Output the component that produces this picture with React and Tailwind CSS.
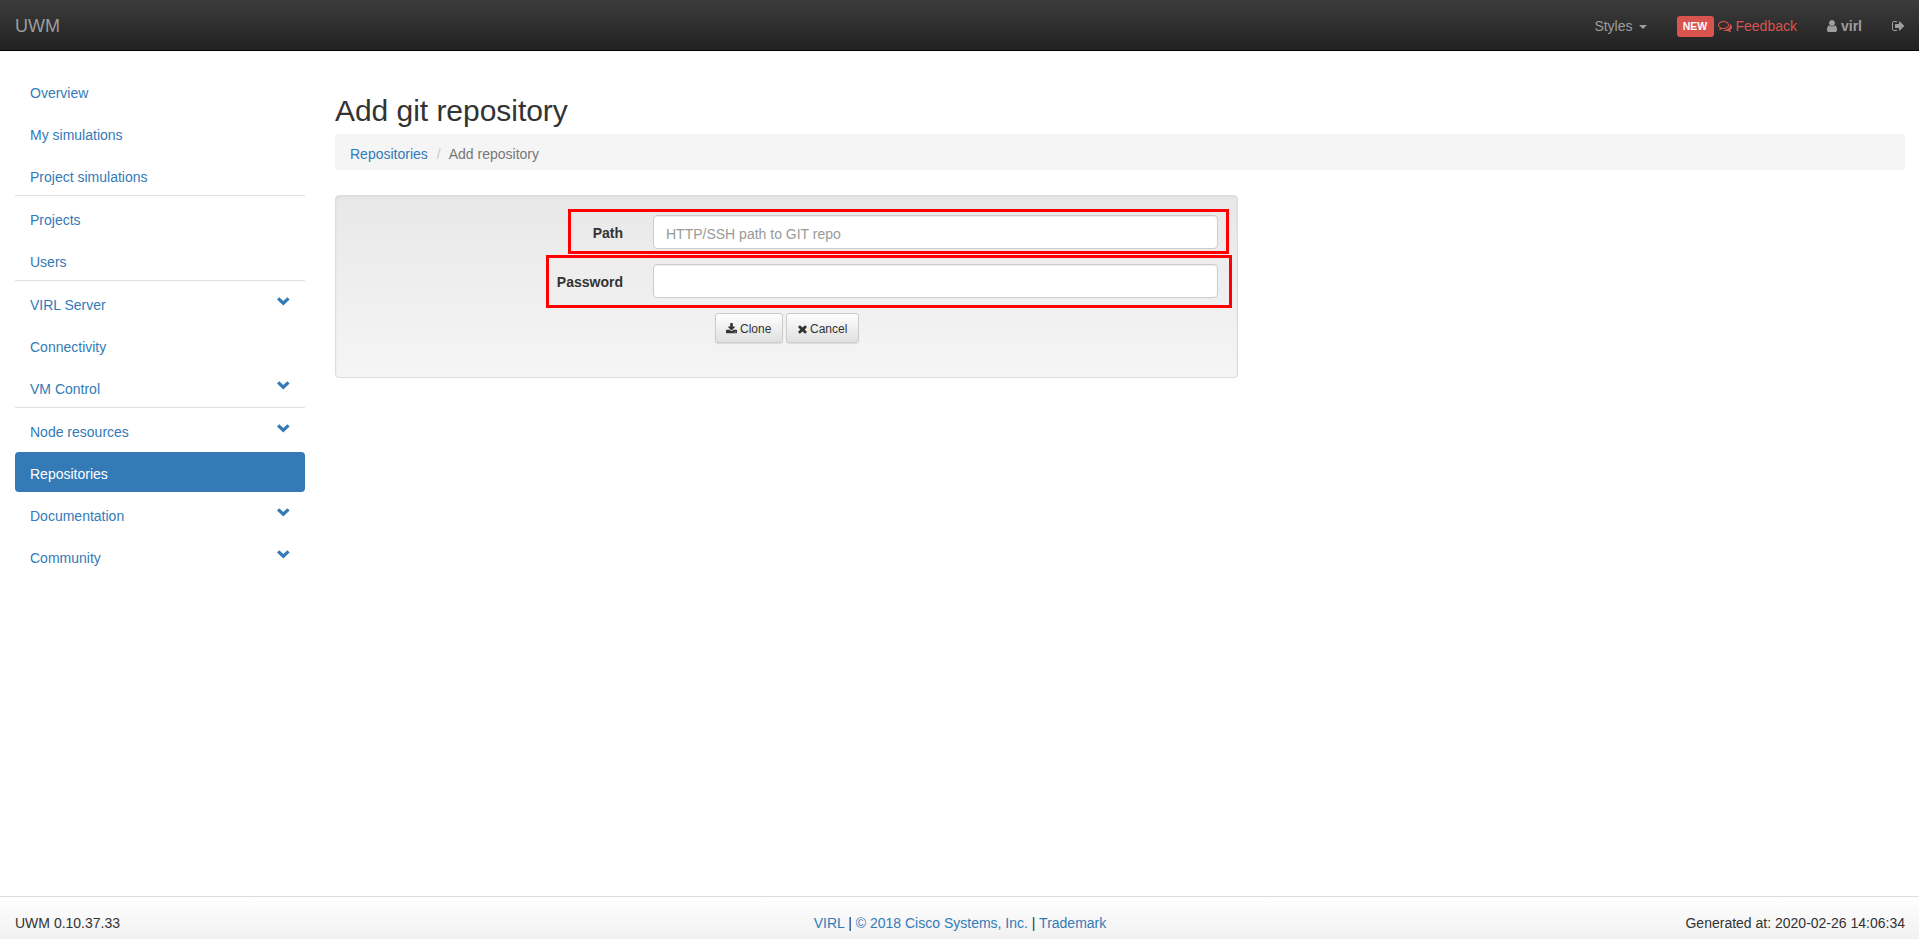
function Glyph({ d, box = "0 0 1792 1792", className }) {
  return (
    <svg viewBox={box} className={className} fill="currentColor" aria-hidden="true">
      <path d={d} />
    </svg>
  );
}

const COMMENTS =
  "M704 384q-153 0-286 52t-211.5 141-78.5 191q0 82 53 158t149 132l97 56-35 84q34-20 62-39l44-31 53 10q78 14 153 14 153 0 286-52t211.5-141 78.5-191-78.5-191-211.5-141-286-52zm0-128q191 0 353.5 68.5t256.5 186.5 94 257-94 257-256.5 186.5-353.5 68.5q-86 0-176-16-124 88-278 128-36 9-86 16h-3q-11 0-20.5-8t-11.5-21q-1-3-1-6.5t.5-6.5 2-6l2.5-5 3.5-5.5 4-5 4.5-5 4-4.5q5-6 23-25t26-29.5 22.5-29 25-38.5 20.5-44q-124-72-195-177t-71-224q0-139 94-257t256.5-186.5 353.5-68.5zm822 1169q10 24 20.5 44t25 38.5 22.5 29 26 29.5 23 25q1 1 4 4.5t4.5 5 4 5 3.5 5.5l2.5 5 2 6 .5 6.5-1 6.5q-3 14-13 22t-22 7q-50-7-86-16-154-40-278-128-90 16-176 16-271 0-472-132 58 4 88 4 161 0 309-45t264-129q125-92 192-212t67-254q0-77-23-152 129 71 204 178t75 230q0 120-71 224.5t-195 176.5z";
const USER =
  "M1536 1399q0 109-62.5 187t-150.5 78h-854q-88 0-150.5-78t-62.5-187q0-85 8.5-160.5t31.5-152 58.5-131 94-89 134.5-34.5q131 128 313 128t313-128q76 0 134.5 34.5t94 89 58.5 131 31.5 152 8.5 160.5zm-256-887q0 159-112.5 271.5t-271.5 112.5-271.5-112.5-112.5-271.5 112.5-271.5 271.5-112.5 271.5 112.5 112.5 271.5z";
const SIGN_OUT =
  "M704 1440q0 4 1 20t.5 26.5-3 23.5-10 19.5-20.5 6.5h-320q-119 0-203.5-84.5t-84.5-203.5v-704q0-119 84.5-203.5t203.5-84.5h320q13 0 22.5 9.5t9.5 22.5q0 4 1 20t.5 26.5-3 23.5-10 19.5-20.5 6.5h-320q-66 0-113 47t-47 113v704q0 66 47 113t113 47h312l11.5 1 11.5 3 8 5.5 7 9 2 13.5zm928-544q0 26-19 45l-544 544q-19 19-45 19t-45-19-19-45v-288h-448q-26 0-45-19t-19-45v-384q0-26 19-45t45-19h448v-288q0-26 19-45t45-19 45 19l544 544q19 19 19 45z";
const DOWNLOAD =
  "M1344 1344q0-26-19-45t-45-19-45 19-19 45 19 45 45 19 45-19 19-45zm256 0q0-26-19-45t-45-19-45 19-19 45 19 45 45 19 45-19 19-45zm128-224v320q0 40-28 68t-68 28h-1472q-40 0-68-28t-28-68v-320q0-40 28-68t68-28h465l135 136q58 56 136 56t136-56l136-136h464q40 0 68 28t28 68zm-325-569q17 41-14 70l-448 448q-18 19-45 19t-45-19l-448-448q-31-29-14-70 17-39 59-39h256v-448q0-26 19-45t45-19h256q26 0 45 19t19 45v448h256q42 0 59 39z";
const REMOVE =
  "M1.9 0.2 L4.5 2.5 L7.1 0.2 L9 2.1 L6.7 4.5 L9 6.9 L7.1 8.8 L4.5 6.5 L1.9 8.8 L0 6.9 L2.3 4.5 L0 2.1 Z";
const CHEVRON = "M2.2 0.2 L6.3 4 L10.4 0.2 L12.6 2.4 L6.3 8.6 L0 2.4 Z";

const NAV = [
  [{ label: "Overview" }, { label: "My simulations" }, { label: "Project simulations" }],
  [{ label: "Projects" }, { label: "Users" }],
  [{ label: "VIRL Server", more: true }, { label: "Connectivity" }, { label: "VM Control", more: true }],
  [
    { label: "Node resources", more: true },
    { label: "Repositories", active: true },
    { label: "Documentation", more: true },
    { label: "Community", more: true },
  ],
];

function Navbar() {
  return (
    <header className="flex h-[51px] shrink-0 items-center justify-between border-b border-black bg-linear-to-b from-[#3c3c3c] to-[#222222] pt-0.5 pr-3.5 pl-[15px] text-[#9d9d9d]">
      <a className="text-lg leading-5">UWM</a>
      <nav className="flex items-center gap-[30px] leading-5">
        <a className="flex items-center">
          Styles
          <span className="mt-0.5 ml-1.5 border-x-4 border-t-4 border-x-transparent border-t-[#9d9d9d]" />
        </a>
        <a className="flex items-center text-[#d9534f]">
          <span className="flex h-[21px] w-[37px] items-center justify-center rounded-[3px] bg-[#d9534f] text-[10.5px] font-bold text-white">
            NEW
          </span>
          <Glyph d={COMMENTS} className="mr-1 ml-1 size-3.5" />
          Feedback
        </a>
        <a className="flex items-center font-bold">
          <Glyph d={USER} box="256 0 1280 1792" className="mr-1 h-3.5 w-2.5" />
          virl
        </a>
        <a className="flex w-[13px] items-center">
          <Glyph d={SIGN_OUT} box="64 0 1664 1792" className="h-3.5 w-[13px] shrink-0" />
        </a>
      </nav>
    </header>
  );
}

function Sidebar() {
  return (
    <aside className="mt-5 w-[290px] shrink-0">
      {NAV.map((group, i) => (
        <ul
          key={i}
          className={`flex flex-col gap-0.5 ${i < NAV.length - 1 ? "mb-0.5 border-b border-[#e1e1e1]" : ""}`}
        >
          {group.map(({ label, more, active }) => (
            <li
              key={label}
              className={`flex h-10 items-start justify-between rounded px-[15px] pt-3 leading-5 ${
                active ? "bg-[#337ab7] text-white" : "text-[#337ab7]"
              }`}
            >
              <a>{label}</a>
              {more && <Glyph d={CHEVRON} box="0 0 13 9" className="mt-0.5 h-[9px] w-[13px]" />}
            </li>
          ))}
        </ul>
      ))}
    </aside>
  );
}

const inputClass =
  "h-[34px] w-[565px] rounded border border-[#cccccc] bg-white px-3 pt-1 text-sm shadow-[inset_0_1px_1px_rgba(0,0,0,0.075)] outline-none placeholder:text-[#999999]";
const buttonClass =
  "flex h-[30px] items-center rounded-[3px] border border-[#cccccc] bg-linear-to-b from-white to-[#e0e0e0] pt-0.5 text-xs leading-[18px] shadow-[0_1px_1px_rgba(0,0,0,0.1)]";

function RepositoryForm() {
  return (
    <form className="relative mt-[25px] h-[183px] w-[903px] rounded border border-[#dcdcdc] bg-linear-to-b from-[#e8e8e8] to-[#f5f5f5] pt-[19px] shadow-[inset_0_1px_3px_rgba(0,0,0,0.05)]">
      <div className="flex items-center gap-[30px]">
        <label className="w-[287px] pt-0.5 text-right leading-5 font-bold">Path</label>
        <input className={inputClass} placeholder="HTTP/SSH path to GIT repo" />
      </div>
      <div className="mt-[15px] flex items-center gap-[30px]">
        <label className="w-[287px] pt-0.5 text-right leading-5 font-bold">Password</label>
        <input type="password" className={inputClass} />
      </div>
      <div className="mt-[15px] ml-[379px] flex gap-[3px]">
        <button type="button" className={`${buttonClass} w-[68px] pl-2.5`}>
          <Glyph d={DOWNLOAD} box="64 0 1664 1792" className="mr-[3px] h-3 w-[11px]" />
          Clone
        </button>
        <button type="button" className={`${buttonClass} w-[73px] pl-[11px]`}>
          <Glyph d={REMOVE} box="0 0 9 9" className="mr-[3px] size-[9px]" />
          Cancel
        </button>
      </div>
      <div className="pointer-events-none absolute top-[13px] left-[232px] h-[45px] w-[661px] border-3 border-[#ff0000]" />
      <div className="pointer-events-none absolute top-[59px] left-[210px] h-[53px] w-[686px] border-3 border-[#ff0000]" />
    </form>
  );
}

export default function App() {
  return (
    <div className="flex h-screen flex-col bg-white font-['Liberation_Sans',Arial,sans-serif] text-sm text-[#333333]">
      <Navbar />
      <div className="flex grow gap-[30px] pr-3.5 pl-[15px]">
        <Sidebar />
        <main className="grow">
          <h2 className="mt-[43px] text-3xl leading-[33px] tracking-[-0.04px]">Add git repository</h2>
          <ol className="mt-[7px] flex h-9 items-center rounded bg-[#f5f5f5] px-[15px] pt-1 leading-5">
            <li className="text-[#337ab7]">Repositories</li>
            <li className="pr-2 pl-[9px] text-[#cccccc]">/</li>
            <li className="text-[#777777]">Add repository</li>
          </ol>
          <RepositoryForm />
        </main>
      </div>
      <footer className="grid h-[43px] shrink-0 grid-cols-3 items-center border-t border-[#dddddd] bg-linear-to-b from-white to-[#f1f1f1] pt-2.5 pr-3.5 pl-[15px] leading-5">
        <span>UWM 0.10.37.33</span>
        <span className="text-center">
          <a className="text-[#337ab7]">VIRL</a> | <a className="text-[#337ab7]">© 2018 Cisco Systems, Inc.</a> |{" "}
          <a className="text-[#337ab7]">Trademark</a>
        </span>
        <span className="text-right">Generated at: 2020-02-26 14:06:34</span>
      </footer>
    </div>
  );
}
